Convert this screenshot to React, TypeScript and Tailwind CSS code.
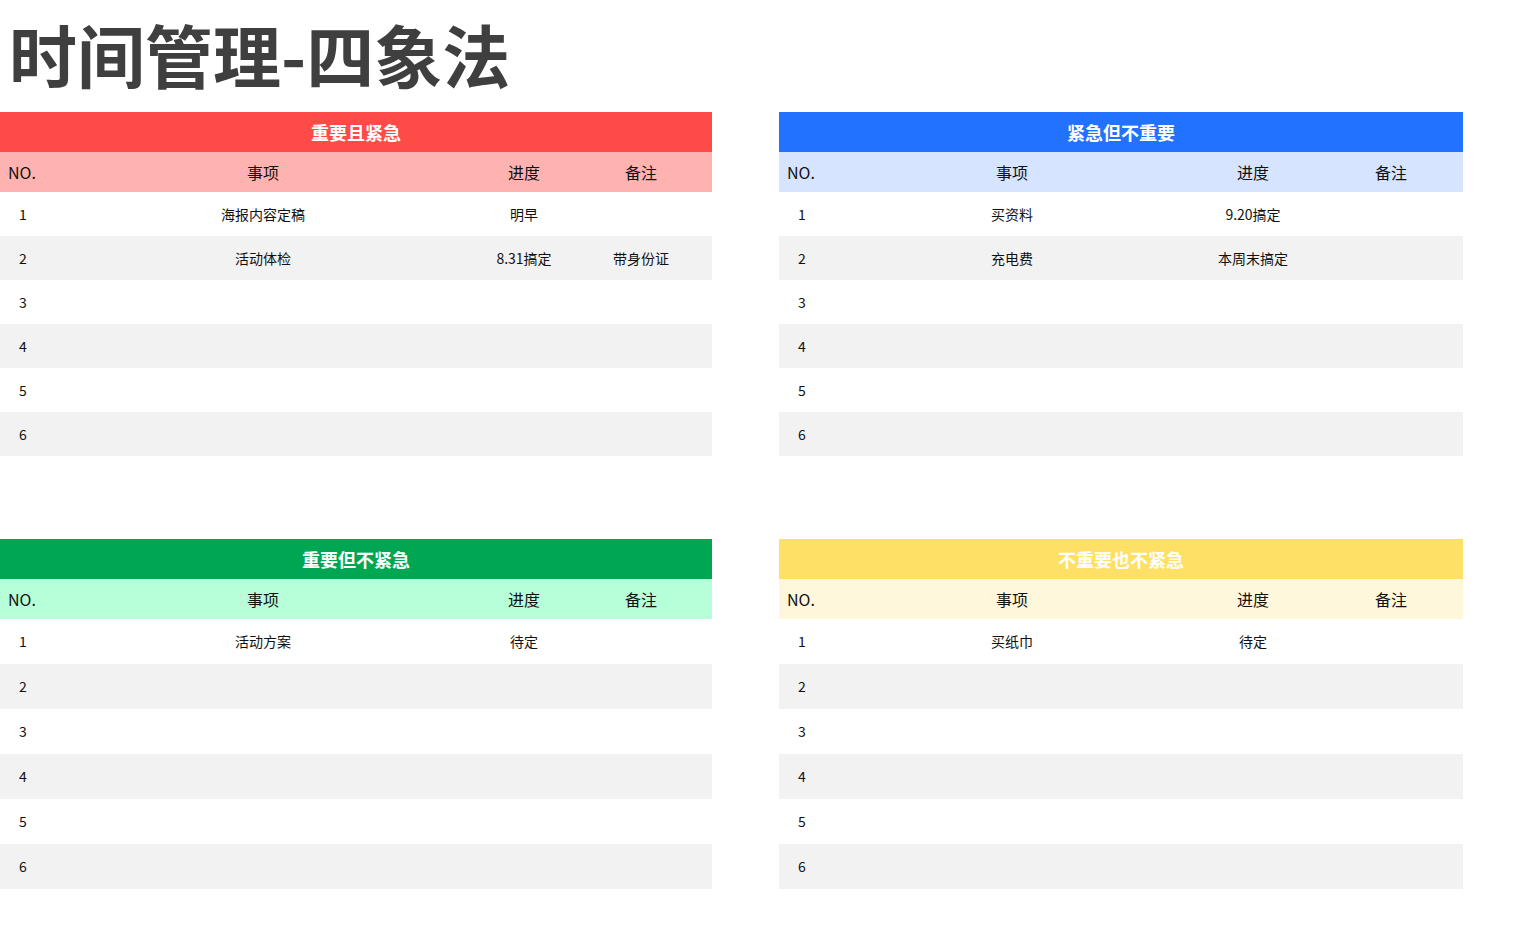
const font = { fontFamily: '"Noto Sans CJK SC", "Noto Sans", sans-serif' }

interface Quad {
  title: string
  head: string
  sub: string
  cols: string[]
  rows: [string, string, string][]
  rowH: string
  width: string
}

const left = ["w-[60px]", "w-[406px]", "w-[116px]", "w-[118px]"]
const right = ["w-[60px]", "w-[346px]", "w-[136px]", "w-[140px]"]

function Table({ q }: { q: Quad }) {
  const rows = Array.from({ length: 6 }, (_, i) => q.rows[i] ?? ["", "", ""])
  return (
    <div className={q.width}>
      <div className={`flex h-[40px] items-center justify-center text-[18px] font-bold text-white ${q.head}`}>
        {q.title}
      </div>
      <div className={`flex h-[40px] items-center text-[16px] text-[#111] ${q.sub}`}>
        <div className={`${q.cols[0]} pl-[8px]`}>NO.</div>
        <div className={`${q.cols[1]} text-center`}>事项</div>
        <div className={`${q.cols[2]} text-center`}>进度</div>
        <div className={`${q.cols[3]} text-center`}>备注</div>
      </div>
      {rows.map((r, i) => (
        <div
          key={i}
          className={`flex ${q.rowH} items-center text-[14px] text-[#111] ${i % 2 ? "bg-[#f2f2f2]" : "bg-white"}`}
        >
          <div className={`${q.cols[0]} pl-[19px]`}>{i + 1}</div>
          <div className={`${q.cols[1]} text-center`}>{r[0]}</div>
          <div className={`${q.cols[2]} text-center`}>{r[1]}</div>
          <div className={`${q.cols[3]} text-center`}>{r[2]}</div>
        </div>
      ))}
    </div>
  )
}

export default function App() {
  const quads: Quad[] = [
    { title: "重要且紧急", head: "bg-[#ff4b47]", sub: "bg-[#ffb3b0]", cols: left, width: "w-[712px]", rowH: "h-[44px]",
      rows: [["海报内容定稿", "明早", ""], ["活动体检", "8.31搞定", "带身份证"]] },
    { title: "紧急但不重要", head: "bg-[#2371ff]", sub: "bg-[#d6e4ff]", cols: right, width: "w-[684px]", rowH: "h-[44px]",
      rows: [["买资料", "9.20搞定", ""], ["充电费", "本周末搞定", ""]] },
    { title: "重要但不紧急", head: "bg-[#00a651]", sub: "bg-[#b6ffd9]", cols: left, width: "w-[712px]", rowH: "h-[45px]",
      rows: [["活动方案", "待定", ""]] },
    { title: "不重要也不紧急", head: "bg-[#ffe066]", sub: "bg-[#fff7dc]", cols: right, width: "w-[684px]", rowH: "h-[45px]",
      rows: [["买纸巾", "待定", ""]] },
  ]
  return (
    <div className="min-h-[933px] bg-white" style={font}>
      <h1 className="h-[112px] pl-[9px] pt-[14px] text-[68px] font-bold leading-[80px] text-[#3f3f3f]">
        时间管理-四象法
      </h1>
      <div className="flex gap-[67px]">
        <Table q={quads[0]} />
        <Table q={quads[1]} />
      </div>
      <div className="mt-[83px] flex gap-[67px]">
        <Table q={quads[2]} />
        <Table q={quads[3]} />
      </div>
    </div>
  )
}
